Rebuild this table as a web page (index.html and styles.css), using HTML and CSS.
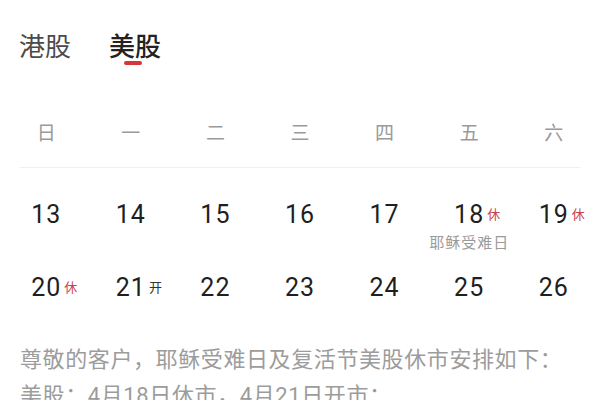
FILE: index.html
```html
<!DOCTYPE html>
<html lang="zh-CN">
<head>
<meta charset="utf-8">
<link rel="stylesheet" href="styles.css">
</head>
<body>
<div class="page">
  <div class="tabs">
    <div class="tab">港股</div>
    <div class="tab active">美股</div>
  </div>
  <div class="weekdays">
    <div>日</div><div>一</div><div>二</div><div>三</div><div>四</div><div>五</div><div>六</div>
  </div>
  <div class="divider"></div>
  <div class="days">
    <div class="cell"><span class="num">13</span></div>
    <div class="cell"><span class="num">14</span></div>
    <div class="cell"><span class="num">15</span></div>
    <div class="cell"><span class="num">16</span></div>
    <div class="cell"><span class="num">17</span></div>
    <div class="cell"><span class="num">18<span class="tag off">休</span></span><span class="sub">耶稣受难日</span></div>
    <div class="cell"><span class="num">19<span class="tag off">休</span></span></div>
    <div class="cell"><span class="num">20<span class="tag off">休</span></span></div>
    <div class="cell"><span class="num">21<span class="tag open">开</span></span></div>
    <div class="cell"><span class="num">22</span></div>
    <div class="cell"><span class="num">23</span></div>
    <div class="cell"><span class="num">24</span></div>
    <div class="cell"><span class="num">25</span></div>
    <div class="cell"><span class="num">26</span></div>
  </div>
  <div class="notice">
    <p>尊敬的客户，耶稣受难日及复活节美股休市安排如下：</p>
    <p>美股：4月18日休市，4月21日开市：</p>
  </div>
</div>
</body>
</html>
```
FILE: styles.css
```css
html, body {
  margin: 0;
  padding: 0;
  background: #ffffff;
}
body {
  font-family: Roboto, "Noto Sans CJK SC", sans-serif;
  width: 600px;
  height: 400px;
  overflow: hidden;
}
.page {
  padding-top: 30px;
}
.tabs {
  display: flex;
  gap: 38px;
  padding: 0 19px;
  height: 30px;
}
.tab {
  position: relative;
  font-family: "Noto Sans CJK SC", sans-serif;
  font-size: 26px;
  line-height: 30px;
  color: #4a4a4a;
}
.tab.active {
  color: #222222;
  font-weight: 500;
}
.tab.active::after {
  content: "";
  position: absolute;
  left: 50%;
  top: 31px;
  width: 18px;
  height: 4px;
  margin-left: -11px;
  border-radius: 2px;
  background: #d8353b;
}
.weekdays {
  display: grid;
  grid-template-columns: repeat(7, 1fr);
  padding: 0 4px;
  margin-top: 52px;
  height: 40px;
  line-height: 40px;
  font-family: "Noto Sans CJK SC", sans-serif;
  font-size: 19px;
  color: #9a9a9a;
  text-align: center;
}
.divider {
  margin: 15px 20px 0;
  height: 1px;
  background: #efefef;
}
.days {
  display: grid;
  grid-template-columns: repeat(7, 1fr);
  grid-template-rows: 73px 30px;
  padding: 32px 4px 0;
}
.cell {
  display: flex;
  flex-direction: column;
  align-items: center;
}
.num {
  position: relative;
  font-size: 25px;
  line-height: 30px;
  letter-spacing: 1px;
  color: #1f1f1f;
}
.tag {
  position: absolute;
  left: calc(100% + 3px);
  top: 7px;
  font-family: "Noto Sans CJK SC", sans-serif;
  font-size: 13px;
  line-height: 13px;
  letter-spacing: 0;
  white-space: nowrap;
}
.tag.off {
  color: #c8404a;
}
.tag.open {
  color: #333333;
}
.sub {
  margin-top: 2px;
  font-family: "Noto Sans CJK SC", sans-serif;
  font-size: 15px;
  line-height: 20px;
  letter-spacing: 1px;
  color: #9a9a9a;
  white-space: nowrap;
}
.notice {
  padding: 39px 20px 0;
  font-size: 22px;
  line-height: 36px;
  letter-spacing: 0.6px;
  color: #9c9c9c;
}
.notice p {
  margin: 0;
  white-space: nowrap;
}
```
